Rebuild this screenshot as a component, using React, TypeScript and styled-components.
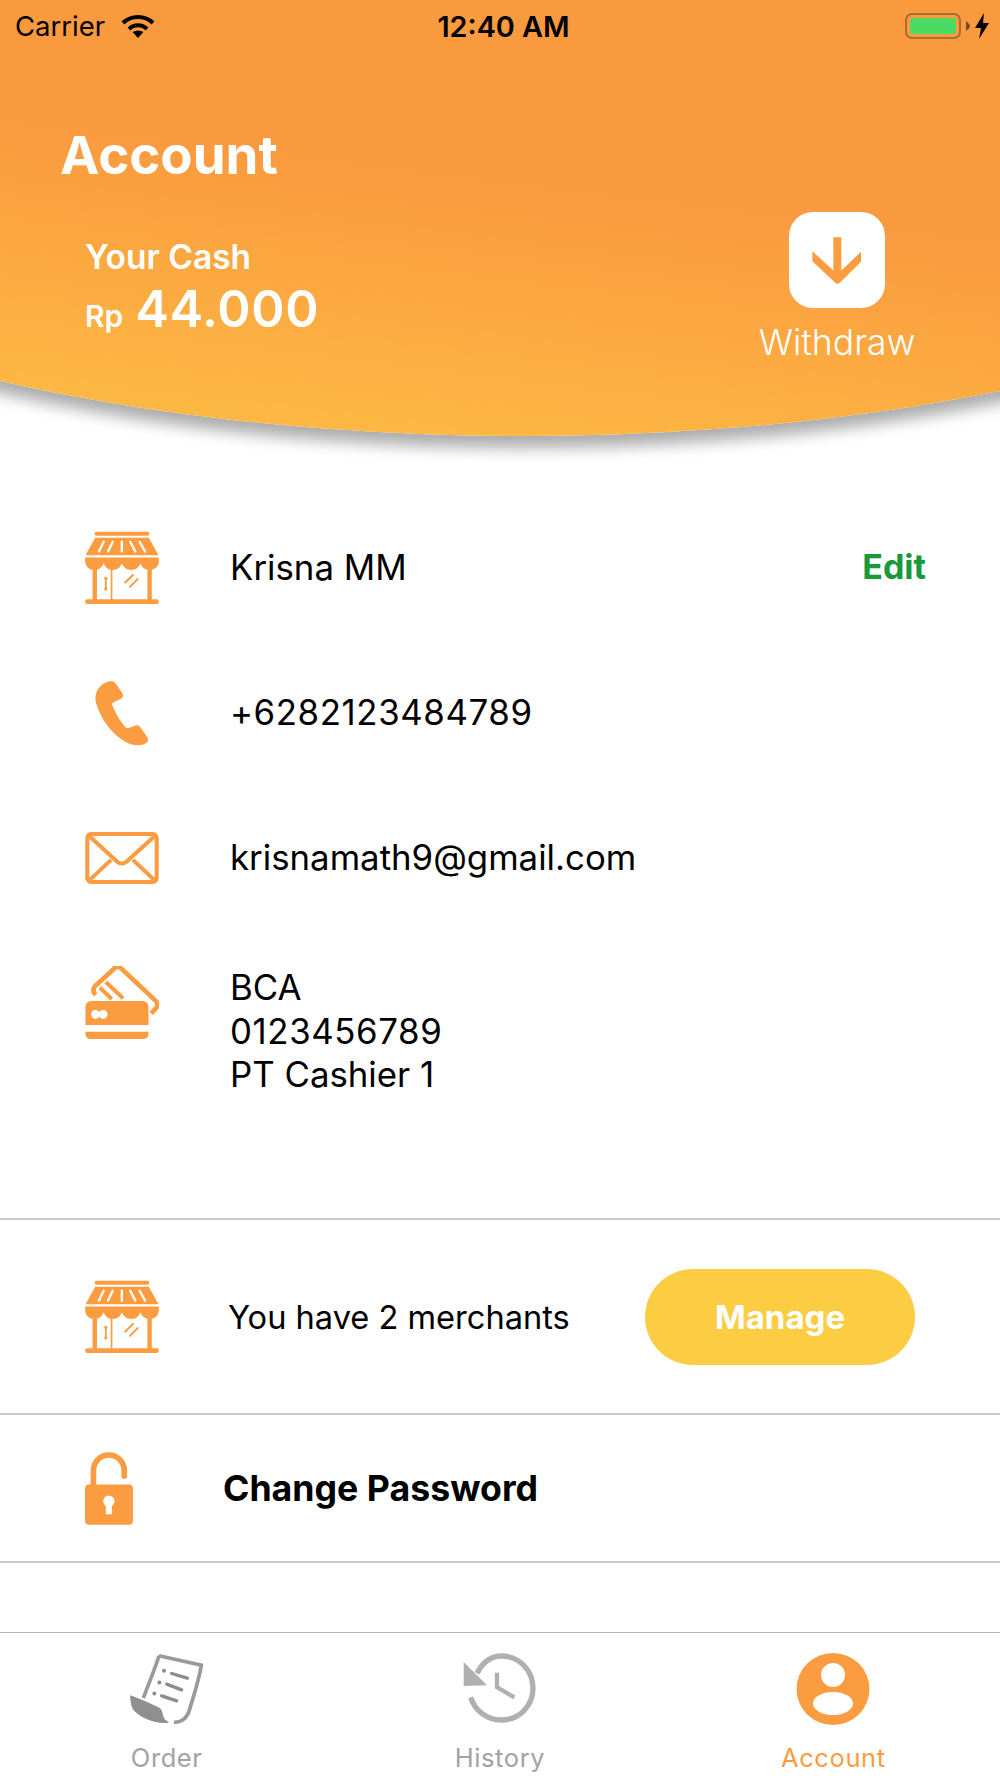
import React from 'react'
import styled, { createGlobalStyle } from 'styled-components'

const ORANGE = '#fb9c40'

const GlobalStyle = createGlobalStyle`
    html, body {
        margin: 0;
        padding: 0;
        background: #fff;
    }

    body {
        font-family: Inter, "Liberation Sans", sans-serif;
        color: #000;
    }
`

const Page = styled.div`
    width: 1000px;
    height: 1778px;
    display: flex;
    flex-direction: column;
    overflow: hidden;
    background: #fff;
`

const Hero = styled.header`
    position: relative;
    height: 436px;
    flex: none;
    color: #fff;
`

const HeroCurve = styled.div`
    position: absolute;
    top: 0;
    left: -477px;
    width: 2000px;
    height: 436px;
    border-radius: 0 0 50% 50% / 0 0 372px 372px;
    background: linear-gradient(187deg, #fa9a3f 45%, #fdb843 84%);
    box-shadow: 0 12px 15px rgba(0, 0, 0, 0.33);
`

const HeroContent = styled.div`
    position: relative;
    display: flex;
    flex-direction: column;
`

const StatusBar = styled.div`
    height: 52px;
    padding: 0 10px 0 15px;
    display: grid;
    grid-template-columns: 1fr auto 1fr;
    align-items: center;
    color: #000;
    font-size: 27.5px;
`

const StatusLeft = styled.div`
    display: flex;
    align-items: center;
    gap: 16px;
`

const StatusRight = styled.div`
    display: flex;
    align-items: center;
    justify-content: flex-end;
    gap: 4px;
`

const StatusTime = styled.div`
    font-size: 28.8px;
    font-weight: 600;
    padding-left: 2px;
`

const Battery = styled.div`
    box-sizing: border-box;
    width: 56px;
    height: 26px;
    padding: 3px;
    border: 2.5px solid #a96d33;
    border-radius: 7px;
    margin-right: 1px;
`

const BatteryLevel = styled.div`
    height: 100%;
    border-radius: 3px;
    background: #4cd964;
`

const Title = styled.h1`
    margin: 71px 0 0 60px;
    font-size: 52.8px;
    line-height: 64px;
    font-weight: 700;
`

const HeroRow = styled.div`
    margin-top: 25px;
    display: flex;
    justify-content: space-between;
    align-items: flex-start;
    padding: 0 85px 0 85px;
`

const Cash = styled.div`
    padding-top: 24px;
`

const CashLabel = styled.div`
    font-size: 33.5px;
    line-height: 42px;
    font-weight: 600;
`

const CashValue = styled.div`
    display: flex;
    align-items: baseline;
    gap: 12px;
    font-size: 30px;
    font-weight: 600;
    line-height: 62px;

    strong {
        font-size: 50.5px;
        font-weight: 600;
        letter-spacing: 0.6px;
    }
`

const Withdraw = styled.div`
    width: 156px;
    display: flex;
    flex-direction: column;
    align-items: center;
    gap: 14px;
    font-size: 35.5px;
    line-height: 42px;
    font-weight: 300;
`

const WithdrawTile = styled.div`
    width: 96px;
    height: 96px;
    border-radius: 24px;
    background: #fff;
    display: flex;
    align-items: center;
    justify-content: center;
`

const InfoList = styled.section`
    height: 782px;
    box-sizing: border-box;
    padding-top: 59px;
    flex: none;
`

const InfoRow = styled.div<{ $top?: boolean }>`
    min-height: 145px;
    display: grid;
    grid-template-columns: 145px 1fr auto;
    align-items: ${p => (p.$top ? 'start' : 'center')};
    padding: ${p => (p.$top ? '36px' : '0')} 74px 0 85px;
    box-sizing: border-box;
    font-size: 34.8px;
    line-height: 43.5px;
`

const Digits = styled.span`
    letter-spacing: 0.6px;
`

const IconCell = styled.div`
    display: flex;
    width: 74px;
    justify-content: center;
`

const EditLink = styled.span`
    color: #18993a;
    font-weight: 700;
    font-size: 34px;
    margin-top: -2px;
`

const Action = styled.section<{ $height: number }>`
    height: ${p => p.$height}px;
    box-sizing: border-box;
    border-top: 2px solid #c9c9c9;
    display: flex;
    align-items: center;
    flex: none;
`

const ActionIcon = styled.div<{ $width: number }>`
    width: ${p => p.$width}px;
    margin-left: 85px;
    flex: none;
    display: flex;
`

const MerchantText = styled.div`
    flex: 1;
    font-size: 32.6px;
    margin-left: -1px;
`

const ManageButton = styled.button`
    width: 270px;
    height: 96px;
    margin-right: 85px;
    border: 0;
    border-radius: 48px;
    background: #fccd42;
    color: #fff;
    font-family: inherit;
    font-size: 33px;
    font-weight: 700;
`

const PasswordText = styled.div`
    font-size: 35.7px;
    font-weight: 700;
`

const TabBar = styled.nav`
    margin-top: auto;
    height: 146px;
    box-sizing: border-box;
    border-top: 1px solid #b5b5b5;
    display: grid;
    grid-template-columns: repeat(3, 1fr);
`

const Tab = styled.div<{ $active?: boolean }>`
    display: flex;
    flex-direction: column;
    align-items: center;
    padding-top: 19px;
    color: ${p => (p.$active ? ORANGE : '#a3a3a3')};
    font-size: 25.5px;
    letter-spacing: 0.6px;
`

const TabIcon = styled.div`
    height: 74px;
    display: flex;
    align-items: center;
    margin-bottom: 15px;
`

const TabLabel = styled.div`
    line-height: 34px;
`

const WifiIcon = () => (
    <svg width="34" height="24" viewBox="0 0 34 24" fill="none" stroke="#000" strokeWidth="4">
        <path d="M2 9C10 1 24 1 32 9" />
        <path d="M8 15C13 10 21 10 26 15" />
        <path d="M17 24L11.500 18C15 16 19 16 22.500 18Z" fill="#000" stroke="none" />
    </svg>
)

const BoltIcon = () => (
    <svg width="16" height="26" viewBox="0 0 16 26">
        <path d="M10 0L1 15H7L5 26L15 10H9Z" fill="#000" />
    </svg>
)

const BatteryNub = () => (
    <svg width="4" height="10" viewBox="0 0 4 10">
        <path d="M0 0C3 2 4 4 4 5C4 6 3 8 0 10Z" fill="#7a4f25" />
    </svg>
)

const DownArrow = () => (
    <svg width="50" height="47" viewBox="0 0 150 140">
        <path
            d="M1 42L64 100V0H88V100L147 44V74L84 136C78 141 74 141 69 136L1 72Z"
            fill={ORANGE}
        />
    </svg>
)

const StoreIcon = () => (
    <svg width="74" height="73" viewBox="0 0 219 217" fill={ORANGE}>
        <rect x="28" y="2" width="163" height="12" rx="6" />
        <path d="M30 20H189L218 72H1Z" />
        <g stroke="#fff" strokeWidth="7" strokeLinecap="round">
            <path d="M55 32L41 61M82 32L68 61M109 32V61M134 32L149 61M162 32L178 61" />
        </g>
        <path d="M0 79H219V90C219 104 208 116 192 116C178 116 169 108 164 96C160 108 150 116 137 116C124 116 114 108 109 96C105 108 95 116 82 116C69 116 59 108 55 96C50 108 41 116 27 116C11 116 0 104 0 90Z" />
        <rect x="22" y="100" width="13" height="108" />
        <rect x="185" y="100" width="13" height="108" />
        <rect x="76" y="100" width="5" height="108" />
        <rect x="0" y="203" width="219" height="14" rx="7" />
        <rect x="59" y="138" width="5" height="38" />
        <circle cx="61.500" cy="141" r="5" />
        <circle cx="61.500" cy="172" r="5" />
        <g stroke={ORANGE} strokeWidth="6" strokeLinecap="round">
            <path d="M119 153L142 131M133 166L156 143" />
        </g>
    </svg>
)

const PhoneIcon = () => (
    <svg width="54" height="66" viewBox="100 503 163 198" fill={ORANGE}>
        <path d="M128 512C140 505 155 503 162 512L183 543C187 550 184 556 178 559L155 570C152 572 151 575 152 578C160 600 175 625 192 645C195 648 199 648 202 647L222 640C228 638 233 640 237 645L258 675C262 682 261 688 255 692C235 705 210 700 190 688C150 665 118 620 104 575C96 550 106 525 128 512Z" />
    </svg>
)

const MailIcon = () => (
    <svg width="74" height="52" viewBox="73 65 219 155" fill="none" stroke={ORANGE} strokeWidth="12">
        <rect x="79" y="71" width="207" height="143" rx="12" />
        <path d="M84 76L170 155C176 160 188 160 194 155L281 76" strokeLinejoin="round" />
        <path d="M84 210L150 148M281 210L215 148" />
    </svg>
)

const CardIcon = () => (
    <svg width="74" height="73" viewBox="73 468 219 219" fill="none">
        <path
            d="M103 555C95 545 95 535 103 527L160 475C166 469 174 469 180 475L283 572C290 579 290 587 285 594L270 610"
            stroke={ORANGE}
            strokeWidth="14"
        />
        <path d="M116 533L152 567M134 516L186 565" stroke={ORANGE} strokeWidth="12" />
        <path d="M73 592C73 580 80 573 92 573H243C255 573 262 580 262 592V645H73Z" fill={ORANGE} />
        <path d="M73 665H262V672C262 681 255 687 245 687H90C80 687 73 681 73 672Z" fill={ORANGE} />
        <circle cx="103" cy="613" r="13" fill="#fff" />
        <circle cx="126" cy="613" r="13" fill="#fff" />
    </svg>
)

const LockIcon = () => (
    <svg width="48" height="73" viewBox="75 575 143 218">
        <path d="M100 680V630A46 46 0 0 1 192 630V647" fill="none" stroke={ORANGE} strokeWidth="17" strokeLinecap="round" />
        <rect x="75" y="672" width="143" height="120" rx="12" fill={ORANGE} />
        <circle cx="146" cy="722" r="17" fill="#fff" />
        <rect x="137" y="725" width="18" height="36" fill="#fff" />
    </svg>
)

const OrderIcon = () => (
    <svg width="74" height="71" viewBox="90 100 222 212" fill="none" stroke="#9a9a9a" strokeWidth="11">
        <path d="M177 105L304 133C298 170 280 230 268 268C262 290 245 306 222 304" />
        <path d="M177 105C165 145 145 190 130 232" />
        <path d="M92 225L130 240L178 262C190 268 182 296 205 304C170 310 120 290 100 265C95 255 92 240 92 225Z" fill="#8f8f8f" stroke="#8f8f8f" strokeWidth="3" />
        <g stroke="#8c8c8c" strokeLinecap="round" strokeWidth="10">
            <path d="M215 158L262 172M200 190L245 207M185 225L230 240" />
            <path d="M192 150V150.100M178 185V185.100M163 218V218.100" strokeWidth="12" />
        </g>
    </svg>
)

const HistoryIcon = () => (
    <svg width="74" height="74" viewBox="1090 96 222 222" fill="none" stroke="#b0b0b0" strokeWidth="16">
        <path d="M1132 160C1150 125 1175 108 1205 108C1258 108 1300 150 1300 205C1300 258 1258 300 1205 300C1160 300 1125 270 1113 232" />
        <path d="M1092 126V198L1162 196Z" fill="#b0b0b0" stroke="none" />
        <path d="M1192 158V202L1244 232" strokeWidth="13" />
    </svg>
)

const AccountIcon = () => (
    <svg width="74" height="72" viewBox="0 0 74 72">
        <ellipse cx="37" cy="36" rx="36.500" ry="36" fill={ORANGE} />
        <circle cx="37" cy="22" r="12" fill="#fff" />
        <ellipse cx="37" cy="50.500" rx="20" ry="11.500" fill="#fff" />
    </svg>
)

export default function App() {
    return (
        <Page>
            <GlobalStyle />
            <Hero>
                <HeroCurve />
                <HeroContent>
                    <StatusBar>
                        <StatusLeft>Carrier <WifiIcon /></StatusLeft>
                        <StatusTime>12:40 AM</StatusTime>
                        <StatusRight>
                            <Battery><BatteryLevel /></Battery>
                            <BatteryNub />
                            <BoltIcon />
                        </StatusRight>
                    </StatusBar>
                    <Title>Account</Title>
                    <HeroRow>
                        <Cash>
                            <CashLabel>Your Cash</CashLabel>
                            <CashValue>Rp <strong>44.000</strong></CashValue>
                        </Cash>
                        <Withdraw>
                            <WithdrawTile><DownArrow /></WithdrawTile>
                            Withdraw
                        </Withdraw>
                    </HeroRow>
                </HeroContent>
            </Hero>

            <InfoList>
                <InfoRow>
                    <IconCell><StoreIcon /></IconCell>
                    <div>Krisna MM</div>
                    <EditLink>Edit</EditLink>
                </InfoRow>
                <InfoRow>
                    <IconCell><PhoneIcon /></IconCell>
                    <Digits>+6282123484789</Digits>
                </InfoRow>
                <InfoRow>
                    <IconCell><MailIcon /></IconCell>
                    <div>krisnamath9@gmail.com</div>
                </InfoRow>
                <InfoRow $top>
                    <IconCell><CardIcon /></IconCell>
                    <div>BCA<br /><Digits>0123456789</Digits><br />PT Cashier 1</div>
                </InfoRow>
            </InfoList>

            <Action $height={195}>
                <ActionIcon $width={144}><StoreIcon /></ActionIcon>
                <MerchantText>You have 2 merchants</MerchantText>
                <ManageButton>Manage</ManageButton>
            </Action>
            <Action $height={148}>
                <ActionIcon $width={138}><LockIcon /></ActionIcon>
                <PasswordText>Change Password</PasswordText>
            </Action>
            <Action $height={71} />

            <TabBar>
                <Tab><TabIcon><OrderIcon /></TabIcon><TabLabel>Order</TabLabel></Tab>
                <Tab><TabIcon><HistoryIcon /></TabIcon><TabLabel>History</TabLabel></Tab>
                <Tab $active><TabIcon><AccountIcon /></TabIcon><TabLabel>Account</TabLabel></Tab>
            </TabBar>
        </Page>
    )
}
